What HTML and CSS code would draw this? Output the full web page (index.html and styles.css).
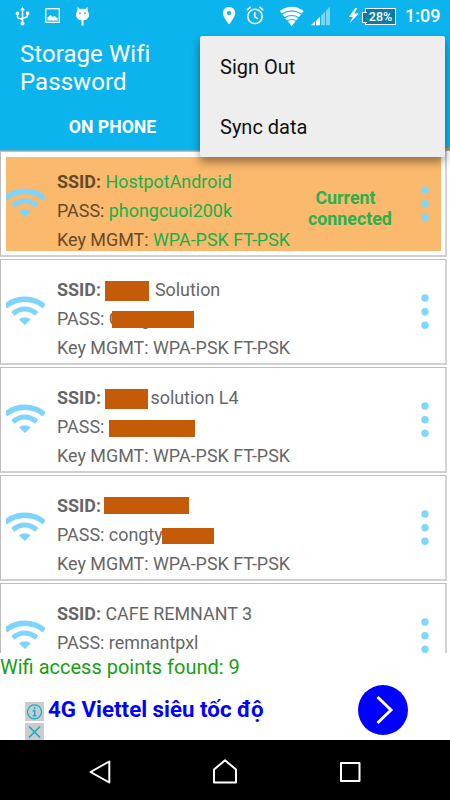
FILE: index.html
```html
<!DOCTYPE html>
<html lang="en">
<head>
<meta charset="utf-8">
<title>Storage Wifi Password</title>
<link rel="stylesheet" href="styles.css">
</head>
<body>
<svg width="0" height="0" class="defs">
  <symbol id="wifi" viewBox="0 0 40 30">
    <g fill="none" stroke="#7fd4fb">
      <path d="M-.5 10.300C11 .6 28 .6 39.300 10.300" stroke-width="5.600"/>
      <path d="M7 18C14.500 11.300 24 11.300 31.500 18" stroke-width="5.200"/>
    </g>
    <path d="M13.300 23.600C17 20.600 22 20.600 25.300 23.600L19.300 29.300Z" fill="#7fd4fb"/>
  </symbol>
  <symbol id="dots" viewBox="0 0 8 36">
    <g fill="#7fd8fb"><circle cx="4" cy="4" r="3.700"/><circle cx="4" cy="17.700" r="3.700"/><circle cx="4" cy="31.300" r="3.700"/></g>
  </symbol>
</svg>
<div class="screen">
  <header class="header">
    <div class="status">
      <svg class="status-icons" width="100" height="32" viewBox="0 0 100 32">
        <g fill="none" stroke="#fff" stroke-width="1.500">
          <path d="M22.500 9v15M17.500 13v3.500q0 1.500 1.500 1.700l3.500 1.300M27.500 12v3.500q0 1.500-1.500 1.700l-3.500 1.300"/>
          <rect x="45.700" y="8.700" width="13.600" height="13.600" stroke-width="1.300"/>
        </g>
        <path d="M22.500 6.700l2.300 3.500h-4.600z" fill="#fff"/>
        <circle cx="22.500" cy="23.500" r="2" fill="#fff"/><circle cx="17.500" cy="13.300" r="1.700" fill="#fff"/><path d="M26 11.700h3.200v3H26z" fill="#fff"/>
        <path d="M47.500 20.500v-3l3.200-2.500 2 2 2-1 3 2.500v2z" fill="#fff"/>
        <path d="M77.500 6.800l2.200 2.300q2.800-.9 5.600 0l2.200-2.300.1 4.200q1.400 1.600 1.400 4c0 7.200-13 7.200-13 0q0-2.400 1.400-4z" fill="#fff"/>
        <path d="M82.500 20v5.600" stroke="#fff" stroke-width="2"/><circle cx="80" cy="13.200" r=".9" fill="#0cb4ed"/><circle cx="85" cy="13.200" r=".9" fill="#0cb4ed"/>
      </svg>
      <svg class="status-icons" width="144" height="32" viewBox="218 0 144 32">
        <path fill="#fff" fill-rule="evenodd" d="M229 7c-3.500 0-6.100 2.600-6.100 6 0 4.400 6.100 11.300 6.100 11.300s6.200-6.900 6.200-11.300c0-3.400-2.700-6-6.200-6zm0 4a2.100 2.100 0 1 1 0 4.200 2.100 2.100 0 0 1 0-4.200z"/>
        <g fill="none" stroke="#fff" stroke-width="1.500"><circle cx="255" cy="16.400" r="7.200"/><path d="M254.700 12v4.800l3.500 2M246.700 10.200l4-3.300M263.300 10.200l-4-3.300"/></g>
        <path d="M279.700 11q12-8.500 24 0L291.700 26.300z" fill="#fff"/>
        <g fill="none" stroke="#0cb4ed" stroke-width="1.100"><path d="M281.500 14.300q10.200-6.800 20.400 0M284.500 17.700q7.200-4.500 14.400 0M287 21q4.700-2.900 9.400 0"/></g>
        <path d="M311 25.300l4-4v4z M316 20.800l4-4v8.500h-4z" fill="#fff"/>
        <path d="M321 15.800l4-4v13.500h-4z M326 10.800l4-4v18.500h-4z" fill="#79d5f4"/>
        <path d="M355.400 8l-6.700 8.900h4.100L349.500 23.500l9.300-10h-4.600l3.200-5.500z" fill="#fff"/>
      </svg>
      <div class="battery">28%</div>
      <div class="clock">1:09</div>
    </div>
    <div class="title">Storage Wifi<br>Password</div>
    <div class="tabs"><div class="tab"><span>ON PHONE</span></div><div class="tab active"></div></div>
  </header>
  <main class="list">
    <section class="card connected">
      <div class="inner">
        <svg class="wifi"><use href="#wifi"/></svg>
        <div class="info">
          <div><b>SSID:</b> <i>HostpotAndroid</i></div>
          <div>PASS: <i>phongcuoi200k</i></div>
          <div>Key MGMT: <i>WPA-PSK FT-PSK</i></div>
        </div>
        <div class="state">Current&nbsp;&nbsp;<br>connected</div>
        <svg class="dots"><use href="#dots"/></svg>
      </div>
    </section>
    <section class="card">
      <div class="inner">
        <svg class="wifi"><use href="#wifi"/></svg>
        <div class="info">
          <div><b>SSID:</b> <span class="bar bar-a"></span> Solution</div>
          <div>PASS: <span class="masked">Cong<span class="bar bar-b"></span></span></div>
          <div>Key MGMT: WPA-PSK FT-PSK</div>
        </div>
        <svg class="dots"><use href="#dots"/></svg>
      </div>
    </section>
    <section class="card">
      <div class="inner">
        <svg class="wifi"><use href="#wifi"/></svg>
        <div class="info">
          <div><b>SSID:</b> <span class="bar bar-c"></span>solution L4</div>
          <div>PASS: <span class="bar bar-d"></span></div>
          <div>Key MGMT: WPA-PSK FT-PSK</div>
        </div>
        <svg class="dots"><use href="#dots"/></svg>
      </div>
    </section>
    <section class="card">
      <div class="inner">
        <svg class="wifi"><use href="#wifi"/></svg>
        <div class="info">
          <div><b>SSID:</b> <span class="bar bar-e"></span></div>
          <div>PASS: congty<span class="bar bar-f"></span></div>
          <div>Key MGMT: WPA-PSK FT-PSK</div>
        </div>
        <svg class="dots"><use href="#dots"/></svg>
      </div>
    </section>
    <section class="card">
      <div class="inner">
        <svg class="wifi"><use href="#wifi"/></svg>
        <div class="info">
          <div><b>SSID:</b> CAFE REMNANT 3</div>
          <div>PASS: remnantpxl</div>
        </div>
        <svg class="dots"><use href="#dots"/></svg>
      </div>
    </section>
  </main>
  <div class="found">Wifi access points found: 9</div>
  <div class="ad">
    <div class="ad-tools">
      <svg width="19" height="19" viewBox="0 0 19 19"><rect width="19" height="19" fill="#ccc"/><circle cx="9.500" cy="9.800" r="7" fill="none" stroke="#14aecb" stroke-width="1.200"/><path d="M9.500 5v2M7.800 8.700h1.900v5M7.700 13.700h3.700" fill="none" stroke="#14aecb" stroke-width="1.600"/></svg>
      <svg width="19" height="17" viewBox="0 0 19 17"><rect width="19" height="17" fill="#ccc"/><path d="M4 3.500l11 11M15 3.500l-11 11" stroke="#14aecb" stroke-width="1.700"/></svg>
    </div>
    <div class="ad-title">4G Viettel siêu tốc độ</div>
    <svg class="go" width="50" height="50" viewBox="0 0 50 50"><circle cx="25" cy="25" r="25" fill="#00f"/><path d="M19.500 12L33 25 19.500 38" fill="none" stroke="#fff" stroke-width="3"/></svg>
  </div>
  <nav class="nav">
    <svg width="450" height="60" viewBox="0 0 450 60" fill="none" stroke="#fff" stroke-width="2" stroke-linejoin="round">
      <path d="M109.300 21.500v21L90.500 32z"/>
      <path d="M214 42.500V29.500L225 20.300l11 9.200v13z"/>
      <rect x="341" y="23" width="18.500" height="18"/>
    </svg>
  </nav>
  <div class="menu"><div>Sign Out</div><div>Sync data</div></div>
</div>
</body>
</html>
```

FILE: styles.css
```css
* { box-sizing: border-box; }
body { margin: 0; font-family: Roboto, "Noto Sans", sans-serif; background: #fff; }
.defs { position: absolute; }
.screen { position: relative; width: 450px; height: 800px; overflow: hidden; display: flex; flex-direction: column; }
.header { height: 151px; flex: none; background: #0cb4ed; color: #fff; display: flex; flex-direction: column; border-bottom: 1px solid #87a9b7; }
.status { height: 32px; display: flex; align-items: center; flex: none; }
.status-icons { flex: none; }
.status-icons + .status-icons { margin-left: 118px; }
.battery { position: relative; width: 31px; height: 17px; margin-left: 3px; border: 1px solid #fff; background: #087da5; font-size: 12.500px; font-weight: 500; line-height: 15px; text-align: center; }
.battery::before { content: ""; position: absolute; left: -4px; top: 3px; width: 4px; height: 9px; border: 1px solid #fff; border-right: 0; background: #087da5; }
.clock { margin-left: 9px; font-size: 18px; font-weight: 500; line-height: 32px; }
.title { padding: 8px 0 0 20px; font-size: 24px; line-height: 28px; height: 71px; flex: none; letter-spacing: .06px; }
.tabs { flex: 1; display: flex; }
.tab { flex: 1; padding-top: 12px; text-align: center; font-size: 17.700px; font-weight: 700; line-height: 24px; }
.tab.active { border-bottom: 2px solid #e48a0c; }
.list { height: 502px; flex: none; overflow: hidden; display: flex; flex-direction: column; gap: 2px; }
.card { width: 447px; height: 106px; flex: none; padding: 5px 4px 4px 5px; border: 1px solid #bdbdbd; border-right: 2px solid #d4d4d4; border-bottom: 2px solid #d0d0d0; }
.inner { display: flex; height: 94px; color: #666; }
.connected .inner { background: #fab96c; color: #65492a; }
.wifi { width: 39px; height: 30px; margin-top: 31px; flex: none; }
.dots { width: 8px; height: 36px; margin: 29px 12.400px 0 auto; flex: none; }
.info { margin: 10px 0 0 12px; font-size: 17.920px; line-height: 29px; white-space: nowrap; }
.info > div { height: 29px; }
.info i { font-style: normal; color: #16b14c; }
.state { margin: 31px 0 0 18px; font-size: 17.800px; line-height: 20.500px; font-weight: 700; text-align: center; color: #2bb04c; }
.bar { display: inline-block; vertical-align: middle; background: #c55a09; }
.bar-a { width: 44px; height: 20px; margin-right: 1px; }
.bar-b { position: absolute; left: 3px; top: 2.500px; width: 82px; height: 17px; }
.bar-c { width: 43px; height: 20px; margin-right: 2px; }
.bar-d { width: 86px; height: 17px; }
.bar-e { width: 85px; height: 17px; margin: -3px 0 0 -1px; }
.bar-f { width: 52px; height: 16px; margin: -1px 0 0 -1px; }
.masked { position: relative; }
.found { height: 29px; flex: none; font-size: 20px; line-height: 29px; color: #16a014; }
.ad { height: 58px; flex: none; display: flex; padding-left: 25px; }
.ad-tools { display: flex; flex-direction: column; gap: 2px; margin-top: 20px; width: 19px; }
.ad-title { margin: 13px 0 0 4px; font-size: 22.300px; line-height: 28px; font-weight: 700; color: #00f; white-space: nowrap; }
.go { margin: 3px 42.500px 0 auto; }
.nav { height: 60px; flex: none; background: #000; }
.menu { position: absolute; left: 200px; top: 36px; width: 245px; height: 120.500px; padding-top: 1px; border-radius: 2px; background: #eee; color: #111; box-shadow: 0 5px 10px rgba(0, 0, 0, .4); font-size: 20px; line-height: 60px; }
.menu div { height: 60px; padding-left: 20px; }
```
